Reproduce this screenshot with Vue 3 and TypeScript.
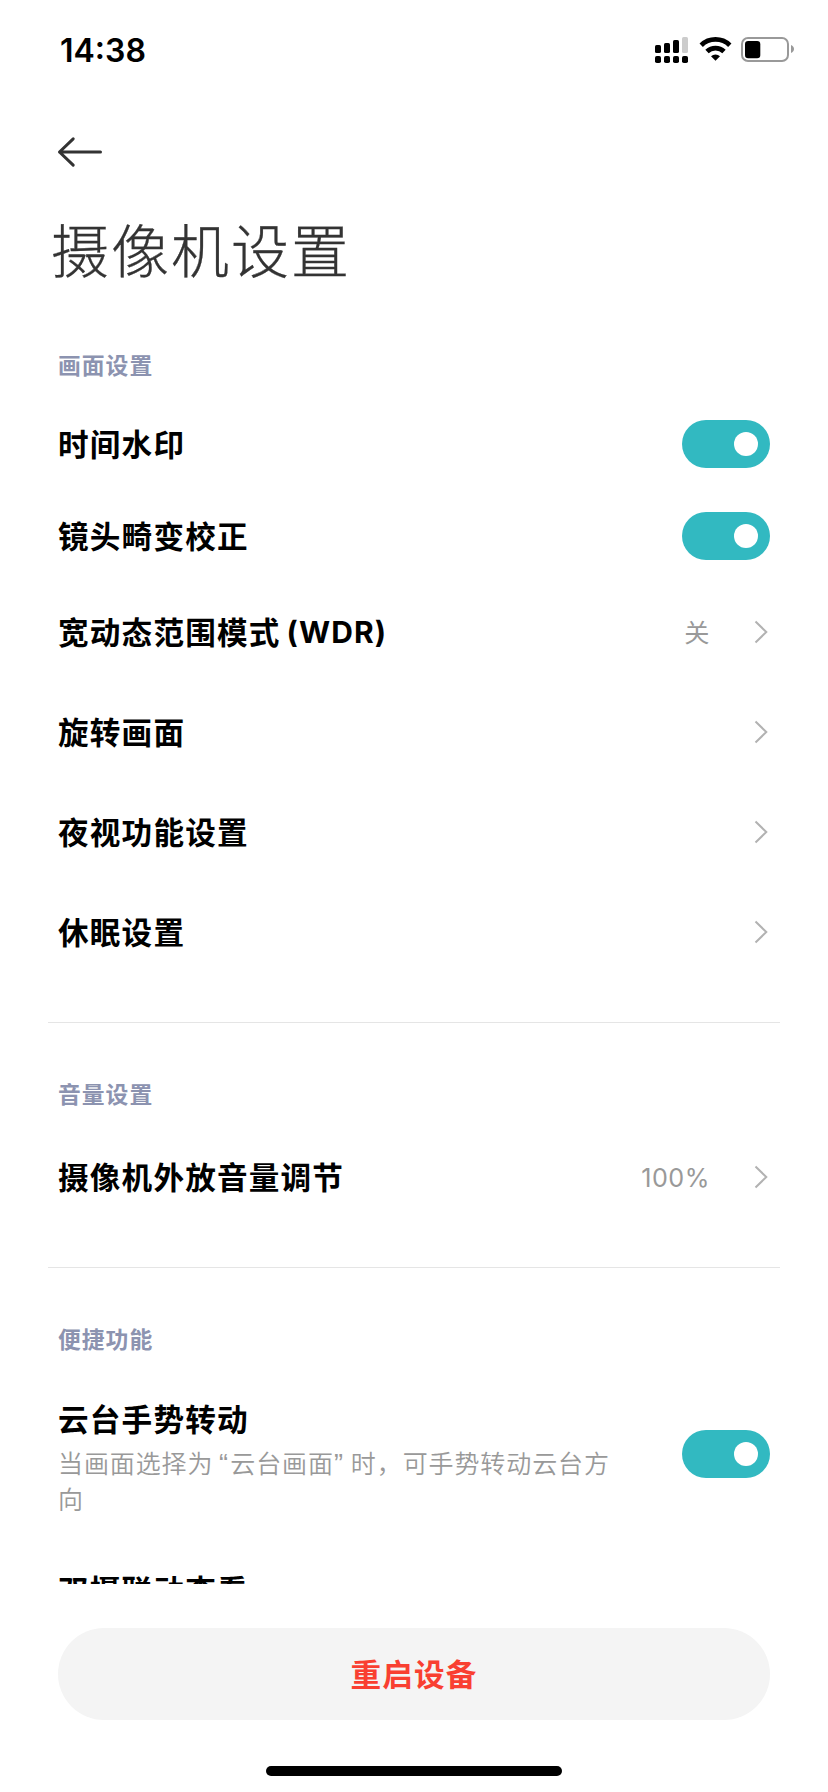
<script setup lang="ts">
interface Item {
  label: string
  suffix?: string
  kind: 'toggle' | 'link'
  value?: string
  on?: boolean
}

interface Section {
  title: string
  items: Item[]
}

const sections: Section[] = [
  {
    title: '画面设置',
    items: [
      { label: '时间水印', kind: 'toggle', on: true },
      { label: '镜头畸变校正', kind: 'toggle', on: true },
      { label: '宽动态范围模式', suffix: '(WDR)', kind: 'link', value: '关' },
      { label: '旋转画面', kind: 'link' },
      { label: '夜视功能设置', kind: 'link' },
      { label: '休眠设置', kind: 'link' },
    ],
  },
  {
    title: '音量设置',
    items: [{ label: '摄像机外放音量调节', kind: 'link', value: '100%' }],
  },
]
</script>

<template>
  <div class="screen">
    <div class="status">
      <span class="clock">14:38</span>
      <svg class="status-icons" width="142" height="28" viewBox="0 0 142 28">
        <g>
          <rect x="2" y="9" width="6" height="8" rx="1.6" />
          <rect x="11" y="7" width="6" height="10" rx="1.6" />
          <rect x="20" y="4" width="6" height="13" rx="1.6" />
          <rect x="29" y="1" width="6" height="16" rx="1.6" fill="#ccc" />
          <rect x="2" y="20" width="6" height="7" rx="1.8" />
          <rect x="11" y="20" width="6" height="7" rx="1.8" />
          <rect x="20" y="20" width="6" height="7" rx="1.8" />
          <rect x="29" y="20" width="6" height="7" rx="1.8" />
        </g>
        <g fill="none" stroke="#000" stroke-width="4.8">
          <path d="M48.2 9.2 A20.6 20.6 0 0 1 76.8 9.2" />
          <path d="M54 15.6 A12.3 12.3 0 0 1 71 15.6" />
        </g>
        <path d="M62.5 24.8 L58 20.3 A6.6 6.6 0 0 1 67 20.3 Z" />
        <rect x="89" y="2" width="46" height="23" rx="6" fill="none" stroke="#999" stroke-width="2" />
        <rect x="92" y="5" width="15.3" height="17.3" rx="3.2" />
        <path d="M138 9 C142 10.5 142 15.5 138 17 Z" fill="#999" />
      </svg>
    </div>

    <header class="nav">
      <svg class="back" width="48" height="34" viewBox="0 0 48 34">
        <path d="M18.2 3.8 L4.5 17 L18.2 30.2 M4.5 17 H45.5" fill="none" stroke="#333" stroke-width="3" stroke-linecap="round" stroke-linejoin="round" />
      </svg>
    </header>

    <main class="content">
      <h1 class="title">摄像机设置</h1>

      <section v-for="section in sections" :key="section.title" class="section">
        <h2 class="section-title">{{ section.title }}</h2>
        <div v-for="item in section.items" :key="item.label" class="row" :class="item.kind">
          <span class="label">{{ item.label }}</span>
          <span v-if="item.suffix" class="suffix">{{ item.suffix }}</span>
          <span v-if="item.kind === 'toggle'" class="switch" :class="{ on: item.on }"><i class="knob"></i></span>
          <template v-else>
            <span v-if="item.value" class="value">{{ item.value }}</span>
            <svg class="chevron" width="16" height="24" viewBox="0 0 16 24">
              <path d="M1.5 1.5 L12.3 12 L1.5 22.5" fill="none" stroke="#b2b2b2" stroke-width="2" />
            </svg>
          </template>
        </div>
      </section>

      <section class="section">
        <h2 class="section-title">便捷功能</h2>
        <div class="row tall">
          <div class="text">
            <span class="label">云台手势转动</span>
            <p class="desc">当画面选择为<span class="open">“</span>云台画面<span class="close">”</span>时，可手势转动云台方向</p>
          </div>
          <span class="switch on"><i class="knob"></i></span>
        </div>
        <div class="row tall">
          <span class="label raised">双摄联动查看</span>
          <span class="switch on"><i class="knob"></i></span>
        </div>
      </section>
    </main>

    <footer class="footer">
      <button class="restart" type="button">重启设备</button>
      <div class="home-bar"></div>
    </footer>
  </div>
</template>

<style>
html,
body {
  margin: 0;
  background: #fff;
}
</style>

<style scoped>
.screen {
  display: flex;
  flex-direction: column;
  width: 828px;
  height: 1792px;
  overflow: hidden;
  background: #fff;
  color: #000;
  font-family: Inter, "Noto Sans CJK SC", sans-serif;
}

.status {
  display: flex;
  flex: none;
  align-items: center;
  justify-content: space-between;
  height: 100px;
  padding: 0 33px 0 60px;
  box-sizing: border-box;
}

.clock {
  padding-top: 2px;
  font-size: 32px;
  font-weight: 600;
  line-height: 40px;
}

.status-icons {
  display: block;
}

.nav {
  display: flex;
  flex: none;
  align-items: center;
  height: 104px;
  padding-left: 55px;
}

.back {
  display: block;
}

.content {
  flex: none;
  height: 1380px;
  overflow: hidden;
}

.title {
  height: 94px;
  margin: 0 0 36px;
  padding-left: 51px;
  color: #333;
  font-size: 58px;
  font-weight: 300;
  line-height: 96px;
  letter-spacing: 2px;
  -webkit-text-stroke: 0.3px #333;
}

.section {
  margin: 0 48px;
  padding: 0 10px 40px;
  border-bottom: 1px solid #e5e5e5;
}

.section + .section {
  padding-top: 40px;
}

.section:last-child {
  border-bottom: 0;
}

.section-title {
  height: 64px;
  margin: 0;
  color: #8c93b0;
  font-size: 22.8px;
  font-weight: 700;
  line-height: 64px;
  letter-spacing: 1px;
}

.row {
  display: flex;
  align-items: center;
}

.row.toggle {
  height: 92px;
}

.row.link {
  height: 100px;
}

.row.tall {
  height: 164px;
}

.label,
.suffix {
  display: block;
  padding-top: 2px;
  font-size: 30.6px;
  font-weight: 700;
  line-height: 42px;
  letter-spacing: 1.2px;
}

.suffix {
  padding: 0 0 0 6px;
  font-size: 30px;
  letter-spacing: 1.1px;
}

.label.raised {
  align-self: flex-start;
  padding-top: 34px;
}

.switch,
.value,
.chevron:nth-child(2) {
  margin-left: auto;
}

.text {
  flex: none;
  width: 560px;
  padding-top: 5px;
}

.desc {
  margin: 3px 0 0;
  color: #999;
  font-family: "Noto Sans CJK SC", sans-serif;
  font-size: 25px;
  font-weight: 350;
  line-height: 36px;
  letter-spacing: 0.9px;
}

.open,
.close {
  font-family: "Liberation Sans", sans-serif;
  font-size: 27px;
  line-height: 0;
}

.open {
  margin: 0 1.5px 0 5.5px;
}

.close {
  margin: 0 7px 0 0;
}

.value {
  margin-right: 44px;
  padding-top: 1px;
  color: #999;
  font-size: 25.2px;
  line-height: 36px;
  letter-spacing: 0.5px;
}

.chevron {
  display: block;
}

.switch {
  display: flex;
  flex: none;
  align-items: center;
  width: 88px;
  height: 48px;
  padding: 0 12px;
  box-sizing: border-box;
  border-radius: 24px;
  background: #e5e5e5;
}

.switch.on {
  justify-content: flex-end;
  background: #32b9c1;
}

.knob {
  width: 24px;
  height: 24px;
  border-radius: 50%;
  background: #fff;
}

.footer {
  display: flex;
  flex: none;
  flex-direction: column;
  align-items: center;
  padding-top: 44px;
}

.restart {
  width: 712px;
  height: 92px;
  padding: 2px 0 0;
  border: 0;
  border-radius: 46px;
  background: #f4f4f4;
  color: #f93f31;
  font-family: inherit;
  font-size: 30.6px;
  font-weight: 700;
  line-height: 90px;
  letter-spacing: 1.2px;
}

.home-bar {
  width: 296px;
  height: 10px;
  margin-top: 46px;
  border-radius: 5px;
  background: #000;
}
</style>
